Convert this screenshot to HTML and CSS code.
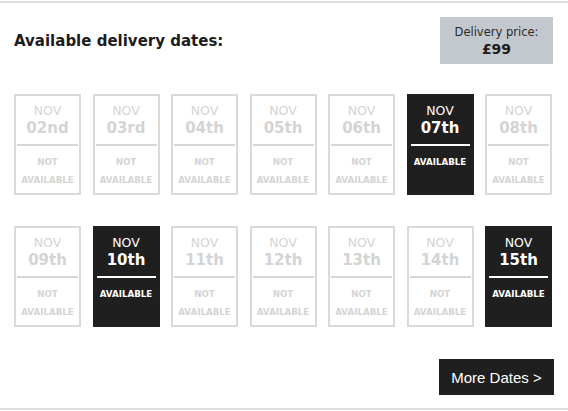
FILE: index.html
```html
<!DOCTYPE html>
<html lang="en">
<head>
<meta charset="UTF-8">
<meta name="viewport" content="width=device-width, initial-scale=1.0">
<title>Delivery Dates</title>
<link rel="stylesheet" href="styles.css">
</head>
<body>
<div class="panel">
  <div class="header">
    <h2>Available delivery dates:</h2>
    <div class="price">
      <span class="price-label">Delivery price:</span>
      <span class="price-value">&pound;99</span>
    </div>
  </div>
  <div class="dates" id="dates"></div>
  <div class="footer">
    <button class="more">More Dates &gt;</button>
  </div>
</div>

<script>
  let days = ['02nd', '03rd', '04th', '05th', '06th', '07th', '08th',
              '09th', '10th', '11th', '12th', '13th', '14th', '15th'];
  let open = ['07th', '10th', '15th'];

  let grid = document.getElementById('dates');
  days.forEach(day => {
    let available = open.includes(day);
    let card = document.createElement('div');
    card.className = available ? 'date available' : 'date';
    card.innerHTML = `
      <div class="month">NOV</div>
      <div class="day">${day}</div>
      <div class="rule"></div>
      <div class="status">${available ? 'AVAILABLE' : 'NOT<br>AVAILABLE'}</div>`;
    grid.appendChild(card);
  });
</script>
</body>
</html>
```

FILE: styles.css
```css
body {
  font-family: "DejaVu Sans", "Liberation Sans", sans-serif;
  margin: 0;
  padding: 0;
  background-color: #ffffff;
  color: #1c1c1c;
}
.panel {
  width: 568px;
  margin-top: 1px;
  border-top: 2px solid #dcdcdc;
  border-bottom: 2px solid #dcdcdc;
  box-sizing: border-box;
  padding: 14px 14px 13px 14px;
}
.header {
  display: flex;
  align-items: center;
  justify-content: space-between;
  padding-right: 1px;
}
h2 {
  margin: 0;
  font-size: 15px;
  font-weight: bold;
}
.price {
  width: 113px;
  height: 47px;
  box-sizing: border-box;
  padding-top: 2px;
  background-color: #c3c8cf;
  display: flex;
  flex-direction: column;
  align-items: center;
  justify-content: center;
}
.price-label {
  font-size: 11.5px;
  color: #2a2a2a;
  line-height: 16px;
}
.price-value {
  font-size: 14px;
  font-weight: bold;
  line-height: 19px;
}
.dates {
  display: grid;
  grid-template-columns: repeat(7, 1fr);
  column-gap: 11.5px;
  row-gap: 31px;
  width: 538px;
  margin-top: 30px;
}
.date {
  height: 101px;
  box-sizing: border-box;
  border: 2px solid #dadada;
  color: #d4d4d4;
  text-align: center;
  padding-top: 7px;
}
.date.available {
  background-color: #1f1f1f;
  border-color: #1f1f1f;
  color: #ffffff;
}
.month {
  font-size: 12.5px;
  line-height: 15px;
}
.day {
  font-size: 15px;
  font-weight: bold;
  line-height: 20px;
}
.rule {
  height: 2px;
  margin: 6px 1px 7px 1px;
  background-color: #d6d6d6;
}
.available .rule {
  background-color: #ffffff;
  margin: 6px 2px 7px 2px;
}
.status {
  font-size: 8.7px;
  font-weight: bold;
  line-height: 18px;
}
.footer {
  display: flex;
  justify-content: flex-end;
  margin-top: 32px;
}
.more {
  width: 115px;
  height: 36px;
  border: none;
  background-color: #1f1f1f;
  color: #ffffff;
  font-family: "Liberation Sans", Arial, sans-serif;
  font-size: 15px;
  cursor: pointer;
}
```
